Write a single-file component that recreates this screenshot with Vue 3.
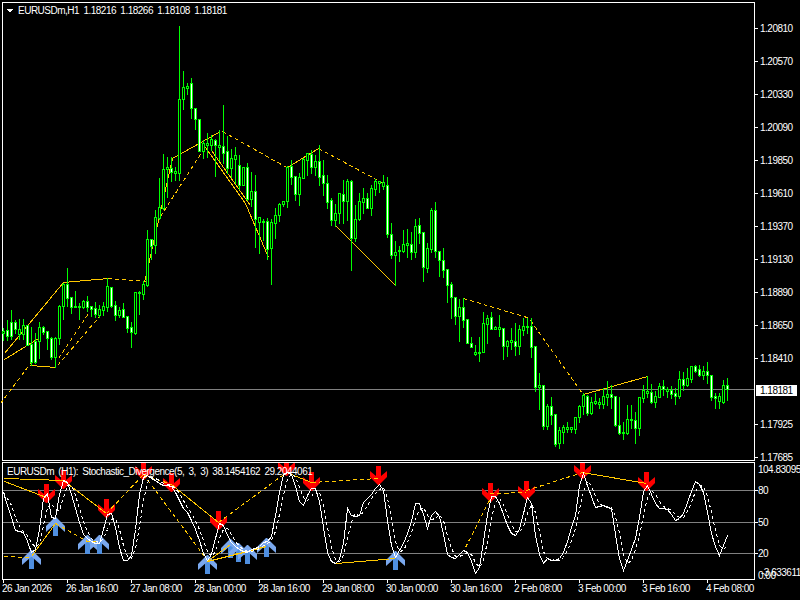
<template>
    <div class="terminal">
        <svg class="chart" width="800" height="600" viewBox="0 0 800 600">
            <defs>
                <clipPath id="subPane">
                    <rect x="3" y="463" width="751" height="116" />
                </clipPath>
            </defs>

            <!-- 主圖 -->
            <rect class="frame" x="2.5" y="2.5" width="752" height="458" />
            <line class="level" x1="3" y1="389.5" x2="754" y2="389.5" />
            <path class="zz solid" :d="pricePaths.solid" />
            <path class="zz dash" :d="pricePaths.dash" />

            <g v-for="c in bars" :key="c.x">
                <rect class="green" :x="c.x" :y="c.high" width="1" :height="c.low - c.high + 1" />
                <rect class="green" :x="c.x - 1" :y="c.top" width="3" :height="c.bottom - c.top + 1" />
                <rect
                    v-if="c.bottom - c.top > 1"
                    :class="c.white ? 'white' : 'black'"
                    :x="c.x"
                    :y="c.top + 1"
                    width="1"
                    :height="c.bottom - c.top - 1"
                />
            </g>

            <path class="ui" d="M6 9h7l-3.5 3.5z" />
            <text class="txt legend" x="18" y="14" xml:space="preserve">EURUSDm,H1  1.18216 1.18266 1.18108 1.18181</text>

            <!-- 價格軸 -->
            <g v-for="p in prices" :key="p.label">
                <rect class="ui" x="755" :y="p.y" width="3" height="1" />
                <text class="txt" x="760" :y="p.y + 4">{{ p.label }}</text>
            </g>
            <rect class="ui" x="756" y="385" width="41" height="11" />
            <text class="txt dark" x="760" y="394">1.18181</text>

            <!-- 副圖 -->
            <rect class="frame" x="2.5" y="462.5" width="752" height="117" />
            <line v-for="l in levels" :key="l.label" class="level" x1="3" :y1="l.y + 0.5" x2="754" :y2="l.y + 0.5" />

            <g clip-path="url(#subPane)">
                <path v-for="a in downArrows" :key="a[0]" class="red" :d="downPath(a[0], a[1])" />
                <g v-for="a in upArrows" :key="a[0]">
                    <path class="blue-dark" :d="upShaft(a[0], a[1])" />
                    <path class="blue" :d="upHead(a[0], a[1])" />
                </g>

                <path class="zz solid" :d="stochPaths.solid" />
                <path class="zz dash" :d="stochPaths.dash" />
                <polyline class="stoch" :points="signalLine" stroke-dasharray="3 3" />
                <polyline class="stoch" :points="mainLine" />
            </g>

            <text class="txt legend" x="7" y="475" xml:space="preserve">EURUSDm (H1):  Stochastic_Divergence(5, 3, 3) 38.1454162 29.2044061</text>

            <text class="txt" x="758" y="473">104.83095</text>
            <g v-for="l in levels" :key="l.label">
                <rect class="ui" x="755" :y="l.y" width="3" height="1" />
                <text class="txt" x="758" :y="l.y + 4">{{ l.label }}</text>
            </g>
            <text class="txt" x="761" y="576">-3.633611</text>
            <text class="txt" x="758" y="579">0.00</text>

            <!-- 時間軸 -->
            <g v-for="(t, i) in times" :key="t">
                <rect class="ui" :x="3 + i * 64" y="580" width="1" height="3" />
                <text class="txt" :x="2 + i * 64" y="592">{{ t }}</text>
            </g>
        </svg>
    </div>
</template>

<script setup>
// [high, bodyTop, bodyBottom, low, 白色實體]
const candles = [
    [328, 331, 333, 340, 0], [320, 330, 336, 340, 1], [310, 322, 336, 339, 1], [320, 322, 329, 333, 1],
    [319, 329, 334, 339, 0], [319, 325, 334, 339, 0], [325, 325, 345, 345, 1], [327, 344, 362, 365, 1],
    [333, 341, 362, 363, 1], [322, 327, 341, 358, 0], [326, 327, 332, 334, 1], [331, 331, 338, 349, 1],
    [337, 338, 357, 359, 1], [337, 338, 357, 367, 0], [305, 306, 338, 344, 0], [283, 284, 306, 319, 0],
    [268, 284, 298, 306, 1], [297, 297, 307, 313, 1], [291, 306, 307, 307, 0], [303, 306, 307, 319, 0],
    [300, 301, 307, 308, 0], [296, 301, 307, 311, 1], [306, 306, 309, 316, 1], [302, 308, 314, 317, 1],
    [305, 309, 315, 317, 0], [302, 306, 310, 315, 0], [278, 286, 307, 311, 0], [287, 287, 306, 307, 1],
    [301, 305, 315, 320, 1], [307, 310, 315, 317, 0], [303, 309, 317, 317, 1], [316, 316, 328, 332, 1],
    [322, 327, 332, 347, 1], [292, 292, 333, 334, 0], [291, 292, 293, 314, 0], [281, 284, 294, 299, 0],
    [230, 239, 285, 286, 0], [239, 239, 246, 259, 1], [210, 217, 245, 253, 0], [178, 207, 218, 219, 0],
    [154, 169, 208, 209, 0], [157, 167, 169, 197, 0], [157, 168, 172, 181, 1], [167, 171, 173, 180, 0],
    [26, 99, 173, 180, 0], [71, 87, 99, 109, 0], [83, 86, 88, 94, 0], [78, 83, 108, 118, 1],
    [108, 108, 119, 129, 1], [119, 119, 151, 151, 1], [140, 143, 151, 158, 0], [133, 143, 145, 157, 0],
    [135, 139, 145, 150, 0], [139, 140, 145, 176, 1], [130, 145, 147, 160, 0], [105, 146, 153, 163, 1],
    [136, 151, 168, 173, 1], [149, 158, 168, 177, 0], [147, 155, 159, 183, 0], [155, 165, 185, 189, 1],
    [167, 167, 185, 185, 0], [163, 167, 199, 200, 1], [172, 191, 199, 206, 0], [175, 191, 219, 247, 1],
    [217, 217, 222, 253, 0], [219, 221, 222, 240, 0], [218, 221, 249, 259, 1], [219, 222, 248, 284, 0],
    [208, 215, 223, 238, 0], [203, 204, 215, 221, 0], [201, 201, 204, 206, 0], [166, 167, 201, 207, 0],
    [160, 166, 177, 184, 1], [176, 176, 194, 200, 1], [173, 177, 194, 205, 0], [158, 159, 178, 178, 0],
    [153, 153, 160, 175, 0], [150, 154, 167, 173, 1], [155, 161, 167, 175, 0], [145, 161, 177, 185, 1],
    [160, 175, 183, 195, 1], [175, 183, 202, 208, 1], [198, 200, 220, 225, 1], [204, 213, 220, 226, 0],
    [193, 193, 213, 223, 0], [180, 194, 201, 223, 1], [179, 181, 201, 220, 0], [180, 181, 238, 270, 1],
    [205, 219, 238, 241, 0], [193, 201, 219, 220, 0], [188, 198, 202, 213, 0], [193, 198, 208, 208, 1],
    [185, 188, 208, 215, 0], [179, 181, 189, 195, 0], [181, 181, 183, 192, 0], [175, 182, 186, 189, 0],
    [177, 185, 234, 237, 1], [223, 234, 255, 258, 1], [241, 252, 255, 285, 0], [246, 250, 251, 261, 0],
    [230, 244, 251, 252, 0], [229, 243, 245, 257, 0], [232, 244, 252, 259, 1], [219, 226, 252, 257, 0],
    [218, 225, 233, 243, 1], [232, 232, 267, 281, 1], [243, 248, 268, 272, 0], [208, 210, 249, 252, 0],
    [202, 210, 251, 257, 1], [251, 251, 260, 276, 1], [248, 260, 270, 277, 1], [269, 269, 285, 302, 1],
    [282, 284, 297, 318, 1], [297, 297, 316, 324, 1], [299, 307, 316, 341, 0], [298, 307, 320, 327, 1],
    [319, 319, 343, 343, 1], [337, 343, 347, 347, 1], [345, 352, 354, 355, 0], [337, 352, 353, 361, 0],
    [312, 323, 352, 352, 0], [315, 318, 324, 343, 0], [312, 317, 329, 329, 1], [326, 327, 329, 329, 0],
    [315, 327, 329, 336, 0], [328, 328, 346, 359, 1], [340, 341, 346, 356, 0], [328, 340, 342, 349, 0],
    [323, 341, 346, 355, 1], [325, 329, 346, 354, 0], [318, 326, 330, 335, 0], [318, 326, 327, 333, 0],
    [318, 326, 347, 357, 1], [346, 346, 387, 391, 1], [373, 385, 387, 409, 0], [385, 385, 426, 429, 1],
    [404, 406, 426, 429, 0], [397, 406, 415, 424, 1], [414, 414, 444, 446, 1], [427, 430, 443, 448, 0],
    [425, 427, 432, 443, 0], [422, 427, 429, 432, 0], [427, 427, 429, 432, 0], [417, 417, 429, 433, 0],
    [405, 406, 417, 422, 0], [393, 395, 406, 414, 0], [395, 396, 413, 415, 1], [397, 402, 413, 414, 0],
    [393, 401, 403, 404, 0], [398, 402, 404, 408, 0], [388, 396, 404, 408, 0], [381, 394, 397, 405, 0],
    [385, 394, 397, 408, 1], [396, 396, 425, 426, 1], [397, 425, 433, 434, 1], [422, 432, 433, 439, 0],
    [405, 419, 433, 434, 0], [405, 419, 420, 428, 0], [412, 420, 428, 443, 1], [397, 397, 428, 435, 0],
    [385, 390, 398, 402, 0], [376, 391, 393, 397, 0], [384, 392, 402, 403, 1], [391, 396, 402, 407, 0],
    [383, 386, 397, 397, 0], [380, 386, 389, 395, 1], [387, 389, 391, 397, 0], [386, 390, 394, 398, 1],
    [388, 393, 396, 404, 1], [371, 379, 396, 398, 0], [372, 379, 385, 390, 1], [368, 378, 385, 386, 0],
    [366, 366, 379, 382, 0], [365, 366, 371, 372, 1], [365, 369, 375, 376, 1], [366, 371, 375, 379, 0],
    [362, 371, 375, 383, 1], [375, 375, 397, 400, 1], [393, 396, 398, 408, 1], [393, 396, 401, 408, 0],
    [380, 385, 402, 403, 0], [378, 385, 389, 400, 1],
]

const bars = candles.map((c, i) => ({
    x: 3 + i * 4,
    high: c[0],
    top: c[1],
    bottom: c[2],
    low: c[3],
    white: c[4] === 1,
}))

const prices = [
    ['1.20810', 28], ['1.20570', 61], ['1.20330', 94], ['1.20090', 127], ['1.19850', 160],
    ['1.19610', 193], ['1.19370', 226], ['1.19130', 259], ['1.18890', 292], ['1.18650', 325],
    ['1.18410', 358], ['1.17925', 424], ['1.17685', 457],
].map(([label, y]) => ({ label, y }))

const levels = [
    { label: '80', y: 490 },
    { label: '50', y: 522 },
    { label: '20', y: 553 },
]

const times = [
    '26 Jan 2026', '26 Jan 16:00', '27 Jan 08:00', '28 Jan 00:00', '28 Jan 16:00', '29 Jan 08:00',
    '30 Jan 00:00', '30 Jan 16:00', '2 Feb 08:00', '3 Feb 00:00', '3 Feb 16:00', '4 Feb 08:00',
]

const toPath = (segs) =>
    segs.map((s) => 'M' + s.map((p) => `${p[0] + 0.5} ${p[1] + 0.5}`).join('L')).join('')

// 主圖的之字線
const pricePaths = {
    solid: toPath([
        [[4, 353], [63, 282]],
        [[4, 359], [38, 338]],
        [[30, 365], [43, 366], [55, 367]],
        [[63, 282], [85, 280], [108, 278]],
        [[144, 282], [172, 158]],
        [[172, 158], [220, 131]],
        [[205, 147], [245, 203], [268, 257]],
        [[211, 150], [250, 205]],
        [[287, 167], [318, 148]],
        [[336, 226], [395, 285]],
        [[583, 394], [647, 376]],
    ]),
    dash: toPath([
        [[0, 403], [30, 363]],
        [[57, 365], [100, 315]],
        [[58, 358], [88, 313]],
        [[108, 278], [147, 281]],
        [[160, 216], [207, 143]],
        [[222, 131], [288, 168]],
        [[318, 148], [385, 184]],
        [[463, 298], [530, 318]],
        [[530, 320], [582, 393]],
    ]),
}

// 副圖的之字線
const stochPaths = {
    solid: toPath([
        [[4, 478], [63, 480]],
        [[4, 481], [46, 497]],
        [[63, 480], [106, 513]],
        [[171, 484], [218, 522]],
        [[31, 556], [55, 523]],
        [[207, 561], [230, 544]],
        [[207, 561], [238, 553]],
        [[207, 561], [247, 551]],
        [[207, 561], [266, 546]],
        [[286, 472], [311, 482]],
        [[336, 563], [395, 558]],
        [[582, 472], [646, 483]],
    ]),
    dash: toPath([
        [[106, 513], [143, 474]],
        [[143, 474], [171, 484]],
        [[218, 522], [286, 472]],
        [[4, 556], [31, 557]],
        [[55, 523], [87, 541], [99, 541]],
        [[143, 474], [207, 560]],
        [[311, 482], [378, 478]],
        [[465, 547], [490, 498]],
        [[490, 493], [526, 492]],
        [[526, 490], [582, 472]],
    ]),
}

const mainPts = [
    [3, 492], [15, 530], [23, 532], [28, 543], [32, 555], [37, 545], [43, 498], [47, 493], [50, 517], [55, 518],
    [60, 488], [63, 480], [68, 483], [75, 508], [82, 533], [87, 538], [93, 543], [100, 543], [106, 515], [110, 510],
    [115, 527], [120, 552], [123, 560], [128, 560], [133, 552], [137, 505], [142, 478], [147, 475], [155, 480],
    [163, 485], [170, 485], [177, 495], [182, 507], [188, 513], [197, 533], [203, 553], [208, 562], [213, 548],
    [218, 523], [223, 525], [228, 538], [233, 545], [240, 550], [247, 552], [253, 548], [258, 547], [263, 542],
    [270, 541], [275, 515], [282, 475], [285, 472], [290, 472], [293, 478], [300, 505], [303, 505], [308, 492],
    [312, 487], [317, 488], [320, 508], [327, 552], [332, 563], [337, 563], [342, 552], [347, 508], [352, 517],
    [360, 515], [363, 502], [370, 495], [377, 485], [382, 483], [385, 505], [390, 542], [395, 557], [402, 545],
    [410, 525], [415, 503], [420, 503], [427, 528], [432, 512], [437, 510], [442, 525], [445, 552], [450, 557],
    [455, 558], [460, 553], [465, 548], [470, 558], [475, 573], [480, 565], [485, 525], [490, 498], [493, 492],
    [500, 505], [507, 525], [513, 537], [518, 533], [527, 497], [532, 505], [535, 535], [538, 552], [543, 563],
    [547, 558], [552, 561], [560, 558], [565, 548], [570, 530], [575, 515], [580, 478], [583, 473], [587, 485],
    [595, 507], [602, 505], [612, 508], [617, 552], [623, 570], [630, 552], [637, 533], [642, 492], [647, 485],
    [657, 507], [660, 508], [668, 509], [676, 522], [683, 513], [690, 493], [695, 481], [702, 487], [707, 512],
    [712, 538], [717, 552], [719, 555], [727, 535],
]

// 每根 K 線取一個值
const sampleAt = (x) => {
    let n = 1
    while (n < mainPts.length - 1 && mainPts[n][0] < x) n++
    const [x0, y0] = mainPts[n - 1]
    const [x1, y1] = mainPts[n]
    return y0 + ((y1 - y0) * (x - x0)) / (x1 - x0)
}

const mainVals = bars.map((b) => sampleAt(b.x))
const signalVals = mainVals.map((_, i) => {
    const from = Math.max(0, i - 2)
    const part = mainVals.slice(from, i + 1)
    return part.reduce((a, b) => a + b, 0) / part.length
})

const toLine = (vals) => vals.map((v, i) => `${bars[i].x + 0.5},${Math.round(v) + 0.5}`).join(' ')
const mainLine = toLine(mainVals)
const signalLine = toLine(signalVals)

const downArrows = [
    [46, 501], [63, 487], [106, 516], [143, 478], [171, 490], [218, 528],
    [286, 474], [311, 489], [378, 483], [490, 500], [526, 498], [582, 477], [646, 489],
]
const upArrows = [
    [31, 551], [55, 518], [87, 536], [99, 536], [207, 556],
    [230, 540], [238, 544], [247, 546], [266, 539], [395, 552],
]

const downPath = (x, y) =>
    `M${x - 2} ${y - 17}H${x + 3}V${y - 7}L${x + 9} ${y - 12}V${y - 6}L${x + 1} ${y + 2}H${x}L${x - 8} ${y - 6}V${y - 12}L${x - 2} ${y - 7}z`
const upShaft = (x, y) => `M${x - 2} ${y + 4}H${x + 3}V${y + 18}H${x - 2}z`
const upHead = (x, y) =>
    `M${x} ${y - 1}H${x + 1}L${x + 10} ${y + 8}V${y + 14}L${x + 1} ${y + 6}H${x}L${x - 9} ${y + 14}V${y + 8}z`
</script>

<style scoped>
.terminal {
    width: 800px;
    height: 600px;
    background: #000;
    overflow: hidden;
}

.chart {
    display: block;
}

.frame {
    fill: none;
    stroke: #fff;
    stroke-width: 1;
    shape-rendering: crispEdges;
}

.level {
    stroke: #808080;
    stroke-width: 1;
    shape-rendering: crispEdges;
}

.green {
    fill: #00ff00;
    shape-rendering: crispEdges;
}

.white,
.ui {
    fill: #fff;
    shape-rendering: crispEdges;
}

.black {
    fill: #000;
    shape-rendering: crispEdges;
}

.zz {
    fill: none;
    stroke: #ffc800;
    stroke-width: 1;
    shape-rendering: crispEdges;
}

.zz.dash {
    stroke-dasharray: 4 3;
}

.stoch {
    fill: none;
    stroke: #fff;
    stroke-width: 1;
    shape-rendering: crispEdges;
}

.red {
    fill: #ff0000;
}

.blue {
    fill: #7aa8ee;
}

.blue-dark {
    fill: #4f8fe0;
}

.txt {
    fill: #fff;
    font-family: "Liberation Sans", Arial, sans-serif;
    font-size: 10px;
    letter-spacing: -0.5px;
}

.legend {
    word-spacing: 2px;
}

.dark {
    fill: #000;
}
</style>
